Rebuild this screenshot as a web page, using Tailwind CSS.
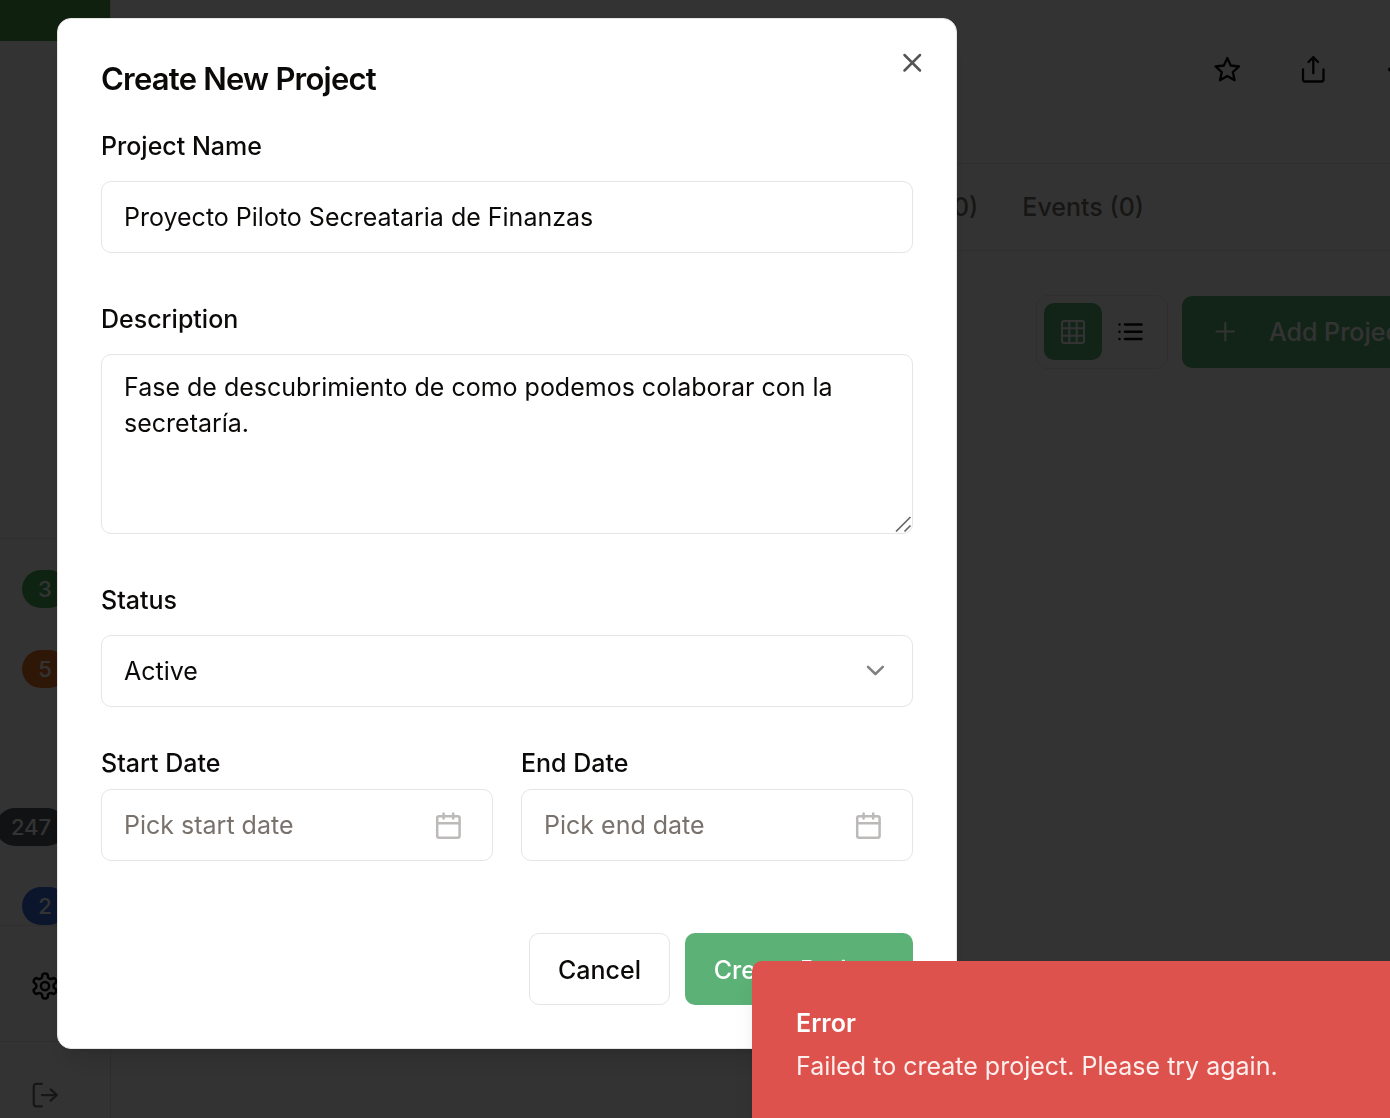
<!DOCTYPE html>
<html lang="en">
<head>
<meta charset="utf-8">
<meta name="viewport" content="width=device-width, initial-scale=1">
<title>Create New Project</title>
<script src="https://cdn.jsdelivr.net/npm/@tailwindcss/browser@4"></script>
</head>
<body class="h-screen overflow-hidden bg-white font-[Inter,sans-serif] text-[25px] leading-9 text-[#0c0a09]">

<div class="flex h-full">
  <aside class="flex w-[111px] shrink-0 flex-col border-r border-stone-200">
    <div class="h-[41px] shrink-0 bg-[#4ea14e]"></div>
    <nav class="mt-[497px] flex h-[388px] shrink-0 flex-col border-y border-stone-200 pt-[31px] text-[22px] font-medium text-white">
      <a href="#" class="ml-[22px] flex h-[38px] w-[46px] items-center justify-center rounded-full bg-[#4cae5c]">3</a>
      <a href="#" class="mt-[42px] ml-[22px] flex h-[38px] w-[46px] items-center justify-center rounded-full bg-[#e8742a]">5</a>
      <a href="#" class="mt-[120px] -ml-1 flex h-[38px] w-[70px] items-center justify-center rounded-full bg-[#555a64]">247</a>
      <a href="#" class="mt-[41px] ml-[22px] flex h-[38px] w-[46px] items-center justify-center rounded-full bg-[#3b6fe0]">2</a>
    </nav>
    <div class="flex h-[116px] shrink-0 items-center border-b border-stone-200 pt-1 pl-[30px]">
      <button aria-label="Settings"><svg class="size-[30px]" viewBox="0 0 24 24" fill="none" stroke="currentColor" stroke-width="2" stroke-linecap="round" stroke-linejoin="round"><path d="M12.22 2h-.44a2 2 0 0 0-2 2v.18a2 2 0 0 1-1 1.73l-.43.25a2 2 0 0 1-2 0l-.15-.08a2 2 0 0 0-2.73.73l-.22.38a2 2 0 0 0 .73 2.73l.15.1a2 2 0 0 1 1 1.72v.51a2 2 0 0 1-1 1.74l-.15.09a2 2 0 0 0-.73 2.73l.22.38a2 2 0 0 0 2.73.73l.15-.08a2 2 0 0 1 2 0l.43.25a2 2 0 0 1 1 1.73V20a2 2 0 0 0 2 2h.44a2 2 0 0 0 2-2v-.18a2 2 0 0 1 1-1.73l.43-.25a2 2 0 0 1 2 0l.15.08a2 2 0 0 0 2.73-.73l.22-.39a2 2 0 0 0-.73-2.73l-.15-.08a2 2 0 0 1-1-1.74v-.5a2 2 0 0 1 1-1.74l.15-.09a2 2 0 0 0 .73-2.73l-.22-.38a2 2 0 0 0-2.73-.73l-.15.08a2 2 0 0 1-2 0l-.43-.25a2 2 0 0 1-1-1.73V4a2 2 0 0 0-2-2z"/><circle cx="12" cy="12" r="3.300"/></svg></button>
    </div>
    <div class="pt-[38px] pl-[30px] text-stone-500">
      <button aria-label="Log out"><svg class="size-[30px]" viewBox="0 0 24 24" fill="none" stroke="currentColor" stroke-width="1.800" stroke-linecap="round" stroke-linejoin="round"><path d="M9.500 3H5a2 2 0 0 0-2 2v14a2 2 0 0 0 2 2h4.500"/><path d="M16.500 16.500L21.500 12l-5-4.500"/><path d="M21 12H9.500"/></svg></button>
    </div>
  </aside>

  <main class="min-w-0 flex-1 overflow-hidden">
    <header class="flex h-[164px] justify-end gap-[58px] border-b border-stone-200 pt-14">
      <button class="size-7" aria-label="Favorite"><svg class="size-7" viewBox="0 0 28 28" fill="none" stroke="currentColor" stroke-width="2.300" stroke-linejoin="round"><path d="M13.300 2l3.400 7.500 8.300 1-6.200 5.600 1.800 8.100-7.300-4.200L6 24.200l1.800-8.100L1.600 10.500l8.300-1z"/></svg></button>
      <button class="size-7" aria-label="Share"><svg class="size-7" viewBox="0 0 28 28" fill="none" stroke="currentColor" stroke-width="2.300" stroke-linecap="round" stroke-linejoin="round"><path d="M3 13.500v10a2 2 0 0 0 2 2h16.500a2 2 0 0 0 2-2v-10"/><path d="M18 6l-4.700-4.700L8.500 6"/><path d="M13.300 1.300v16"/></svg></button>
      <button class="h-7 w-1 overflow-hidden" aria-label="More"><svg class="size-7" viewBox="0 0 28 28" fill="currentColor"><circle cx="4" cy="13.500" r="2"/><circle cx="14" cy="13.500" r="2"/><circle cx="24" cy="13.500" r="2"/></svg></button>
    </header>
    <nav class="flex h-[87px] items-center justify-end gap-11 border-b border-stone-200 pr-[246px] font-medium text-stone-500">
      <a href="#">Contacts (0)</a>
      <a href="#">Events (0)</a>
    </nav>
    <div class="flex justify-end gap-[14px] pt-11">
      <div class="flex h-[74px] w-[132px] items-start rounded-xl border border-stone-200 pt-[7px] pl-[7px]">
        <button class="flex h-[57px] w-[58px] items-center justify-center rounded-[10px] bg-[#5cb176] text-white" aria-label="Grid view"><svg class="size-7" viewBox="0 0 28 28" fill="none" stroke="currentColor" stroke-width="2" stroke-linejoin="round"><rect x="3" y="3" width="22" height="22" rx="2"/><path d="M3 10.300h22M3 17.700h22M10.300 3v22M17.700 3v22"/></svg></button>
        <button class="flex h-[57px] w-[58px] items-center justify-center" aria-label="List view"><svg class="size-7" viewBox="0 0 28 28" fill="none" stroke="currentColor" stroke-width="2.500" stroke-linecap="round"><path d="M8 6.500h16.500M8 13.800h16.500M8 21h16.500M2.500 6.500h.01M2.500 13.800h.01M2.500 21h.01"/></svg></button>
      </div>
      <button class="mt-px flex h-[72px] w-[208px] items-center gap-[30px] overflow-hidden rounded-l-[10px] bg-[#5cb176] pl-[29px] font-medium whitespace-nowrap text-white"><svg class="size-7 shrink-0" viewBox="0 0 28 28" fill="none" stroke="currentColor" stroke-width="2" stroke-linecap="round"><path d="M5.500 13.500h17.500M14.300 5v17.500"/></svg>Add Project</button>
    </div>
  </main>
</div>

<div class="fixed inset-0 bg-black/80 pt-[18px] pl-[57px]">
  <section role="dialog" aria-labelledby="dialog-title" class="relative w-[900px] max-w-full rounded-[14px] border border-stone-200 bg-white px-[43px] pt-[42px] pb-[43px] shadow-xl">
    <button class="absolute top-[30px] right-[30px] text-[#555]" aria-label="Close"><svg class="size-7" viewBox="0 0 28 28" fill="none" stroke="currentColor" stroke-width="2.500" stroke-linecap="round"><path d="M6.500 6l15.500 15.500M22 6L6.500 21.500"/></svg></button>
    <h2 id="dialog-title" class="text-[31px] font-semibold tracking-tight">Create New Project</h2>

    <form>
      <label for="name" class="mt-[31px] block font-medium">Project Name</label>
      <input id="name" value="Proyecto Piloto Secreataria de Finanzas" class="mt-[17px] block h-[72px] w-full rounded-[10px] border border-stone-200 px-[22px]">

      <label for="description" class="mt-12 block font-medium">Description</label>
      <div class="relative mt-[17px]">
        <textarea id="description" class="block h-[180px] w-full resize-none rounded-[10px] border border-stone-200 px-[22px] py-[14px]">Fase de descubrimiento de como podemos colaborar con la secretaría.</textarea>
        <svg class="absolute right-px bottom-px size-[18px]" viewBox="0 0 18 18" fill="none" stroke="#666" stroke-width="1.700"><path d="M2 16.500L16.500 2M10.500 16.500l6-6"/></svg>
      </div>

      <label for="status" class="mt-12 block font-medium">Status</label>
      <div class="relative mt-[17px]">
        <select id="status" class="block h-[72px] w-full appearance-none rounded-[10px] border border-stone-200 bg-white px-[22px]"><option>Active</option></select>
        <svg class="pointer-events-none absolute top-[22px] right-6 size-7" viewBox="0 0 28 28" fill="none" stroke="#808080" stroke-width="2.500" stroke-linecap="round" stroke-linejoin="round"><path d="M7 9.800l7.400 7.200 7.400-7.200"/></svg>
      </div>

      <div class="mt-[38px] grid grid-cols-2 gap-7">
        <div>
          <label for="start" class="block font-medium">Start Date</label>
          <button id="start" type="button" class="mt-2 flex h-[72px] w-full items-center justify-between rounded-[10px] border border-stone-200 pr-[29px] pl-[22px] text-stone-500">Pick start date
            <svg class="size-[30px] text-[#bcbab8]" viewBox="0 0 30 30" fill="none" stroke="currentColor" stroke-width="2.500" stroke-linecap="round" stroke-linejoin="round"><rect x="4.200" y="6.200" width="22.400" height="21.600" rx="2"/><path d="M4.200 13.200h22.400M10.600 3.600v5M20.200 3.600v5"/></svg></button>
        </div>
        <div>
          <label for="end" class="block font-medium">End Date</label>
          <button id="end" type="button" class="mt-2 flex h-[72px] w-full items-center justify-between rounded-[10px] border border-stone-200 pr-[29px] pl-[22px] text-stone-500">Pick end date
            <svg class="size-[30px] text-[#bcbab8]" viewBox="0 0 30 30" fill="none" stroke="currentColor" stroke-width="2.500" stroke-linecap="round" stroke-linejoin="round"><rect x="4.200" y="6.200" width="22.400" height="21.600" rx="2"/><path d="M4.200 13.200h22.400M10.600 3.600v5M20.200 3.600v5"/></svg></button>
        </div>
      </div>

      <div class="mt-[72px] flex justify-end gap-[15px]">
        <button type="button" class="h-[72px] w-[141px] rounded-[10px] border border-stone-200 pt-px font-medium">Cancel</button>
        <button type="button" class="h-[72px] w-[228px] rounded-[10px] bg-[#5cb176] pt-px font-medium whitespace-nowrap text-white">Create Project</button>
      </div>
    </form>
  </section>
</div>

<div role="alert" class="fixed right-0 bottom-0 h-[157px] w-[638px] rounded-tl-[10px] bg-[#dd524c] px-11 pt-11 text-white shadow-xl">
  <p class="font-semibold">Error</p>
  <p class="mt-[7px] whitespace-nowrap text-white/90">Failed to create project. Please try again.</p>
</div>
</body>
</html>
